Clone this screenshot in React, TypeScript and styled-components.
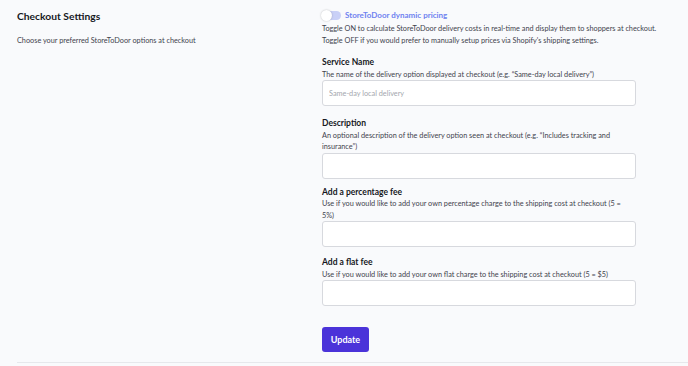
import React from "react";
import styled, { createGlobalStyle } from "styled-components";

const Global = createGlobalStyle`
  html, body { margin: 0; padding: 0; background: #f9fafc; }
  body { font-family: Lato, "Open Sans", sans-serif; color: #3f434d; }
  * { box-sizing: border-box; }
`;

const Page = styled.div`
  padding: 0 0 0 17px;
  min-height: 366px;
`;

const Grid = styled.div`
  display: grid;
  grid-template-columns: 305px 1fr;
  border-bottom: 1px solid #e6e8ec;
  padding-bottom: 10px;
`;

const Intro = styled.div`
  padding-top: 8px;
`;

const Title = styled.h2`
  margin: 0;
  font-size: 10.3px;
  line-height: 16px;
  font-weight: 700;
  color: #16181d;
`;

const Subtitle = styled.p`
  margin: 11px 0 0;
  font-size: 7.3px;
  line-height: 12px;
`;

const Form = styled.div`
  display: flex;
  flex-direction: column;
  padding-top: 9px;
`;

const ToggleRow = styled.label`
  display: flex;
  align-items: center;
  gap: 4px;
  height: 12px;
`;

const Track = styled.span`
  position: relative;
  width: 19px;
  height: 9px;
  border-radius: 5px;
  background: #c9d0f7;
`;

const Knob = styled.span`
  position: absolute;
  left: -1px;
  top: -1px;
  width: 11px;
  height: 11px;
  border-radius: 50%;
  background: #fff;
  box-shadow: 0 0 2px rgba(0, 0, 0, 0.25);
`;

const ToggleLabel = styled.span`
  font-size: 8px;
  font-weight: 700;
  color: #6f82f0;
`;

const Para = styled.p`
  margin: 2px 0 0;
  font-size: 7.3px;
  line-height: 12px;
`;

const Fields = styled.div`
  display: flex;
  flex-direction: column;
  width: 314px;
`;

const Field = styled.div<{ $space: number }>`
  display: flex;
  flex-direction: column;
  margin-top: ${(p) => p.$space}px;
`;

const Label = styled.div`
  font-size: 8.5px;
  line-height: 11.5px;
  font-weight: 700;
  color: #16181d;
`;

const Help = styled.div`
  max-width: 305px;
  font-size: 7.3px;
  line-height: 11.5px;
`;

const Input = styled.input`
  height: 26px;
  width: 314px;
  border: 1px solid #d7d9de;
  border-radius: 3px;
  background: #fff;
  padding: 0 6px;
  font-family: inherit;
  font-size: 7.3px;
  color: #333;
  outline: none;
  &::placeholder { color: #a4a7ae; }
`;

const Button = styled.button`
  margin-top: 21px;
  align-self: flex-start;
  width: 47px;
  height: 25px;
  border: 0;
  border-radius: 3px;
  background: #4b33d9;
  color: #fff;
  font-family: inherit;
  font-weight: 700;
  font-size: 9px;
  padding: 0;
`;

const fields = [
  {
    label: "Service Name",
    help: "The name of the delivery option displayed at checkout (e.g. \u201CSame-day local delivery\u201D)",
    placeholder: "Same-day local delivery",
    space: 10,
  },
  {
    label: "Description",
    help: "An optional description of the delivery option seen at checkout (e.g. \u201CIncludes tracking and insurance\u201D)",
    placeholder: "",
    space: 12,
  },
  {
    label: "Add a percentage fee",
    help: "Use if you would like to add your own percentage charge to the shipping cost at checkout (5 = 5%)",
    placeholder: "",
    space: 8,
  },
  {
    label: "Add a flat fee",
    help: "Use if you would like to add your own flat charge to the shipping cost at checkout (5 = $5)",
    placeholder: "",
    space: 10,
  },
];

export default function App() {
  return (
    <Page>
      <Global />
      <Grid>
        <Intro>
          <Title>Checkout Settings</Title>
          <Subtitle>Choose your preferred StoreToDoor options at checkout</Subtitle>
        </Intro>
        <Form>
          <ToggleRow>
            <Track>
              <Knob />
            </Track>
            <ToggleLabel>StoreToDoor dynamic pricing</ToggleLabel>
          </ToggleRow>
          <Para>
            Toggle ON to calculate StoreToDoor delivery costs in real-time and display them to shoppers at checkout.
            <br />
            Toggle OFF if you would prefer to manually setup prices via Shopify's shipping settings.
          </Para>
          <Fields>
            {fields.map((f) => (
              <Field key={f.label} $space={f.space}>
                <Label>{f.label}</Label>
                <Help>{f.help}</Help>
                <Input placeholder={f.placeholder} />
              </Field>
            ))}
          </Fields>
          <Button>Update</Button>
        </Form>
      </Grid>
    </Page>
  );
}
